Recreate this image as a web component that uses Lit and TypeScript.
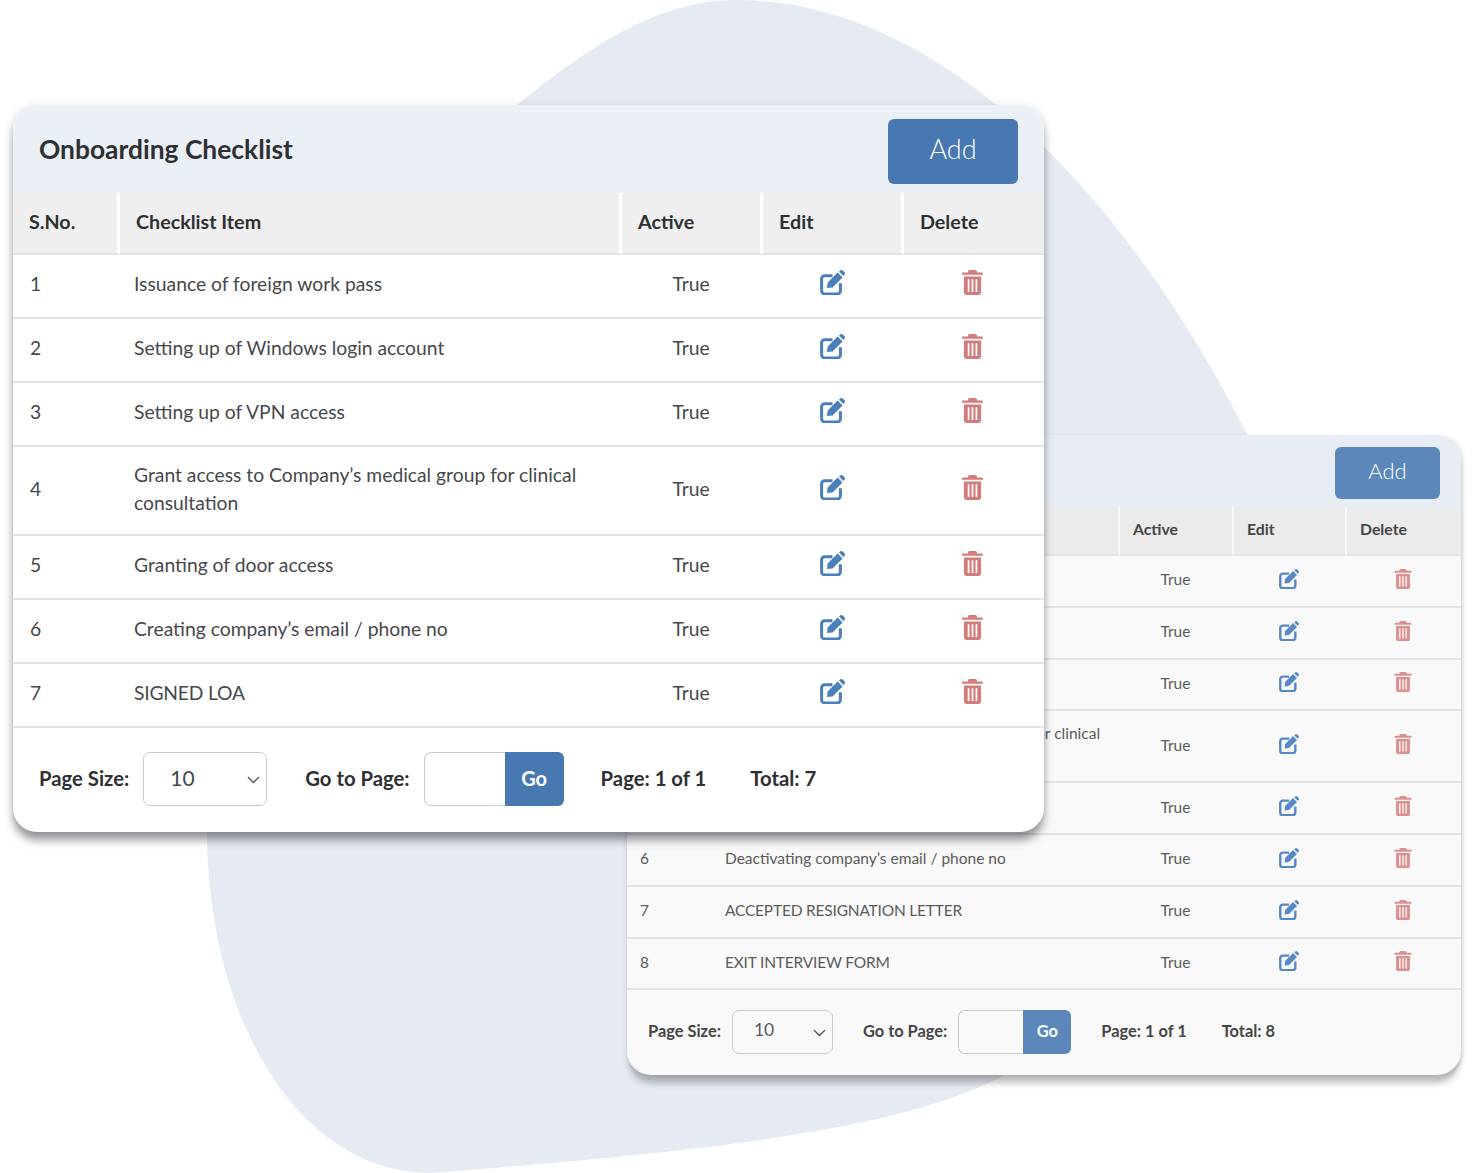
import { LitElement, html, css, svg } from "lit";
import { customElement, property } from "lit/decorators.js";

const editIcon = html`<svg class="edit" viewBox="0 0 25 25">
  ${svg`<path d="M12.5 5.8H4.6a3 3 0 0 0-3 3v12.1a3 3 0 0 0 3 3h12.8a3 3 0 0 0 3-3v-7.7" fill="none" stroke="currentColor" stroke-width="3"/>
  <path fill="currentColor" d="M7.6 12.4 17.6 2.5l4.9 4.9-10 10-5.5.6zM19 1.5l.8-.7a2.4 2.4 0 0 1 3.3 0l1.1 1.1a2.4 2.4 0 0 1 0 3.3l-.8.8z"/>`}
</svg>`;
const trashIcon = html`<svg class="trash" viewBox="0 0 22 26">
  ${svg`<path fill="currentColor" fill-rule="evenodd" d="M8 0h6a1.5 1.5 0 0 1 1.4 1L16 2.4h4.8A1.2 1.2 0 0 1 22 3.6V5H0V3.6a1.2 1.2 0 0 1 1.2-1.2H6L6.6 1A1.5 1.5 0 0 1 8 0zM2 6.6h18v17a2.4 2.4 0 0 1-2.4 2.4H4.4A2.4 2.4 0 0 1 2 23.6zM6 9.5v13.4h1.8V9.5zm4.1 0v13.4h1.8V9.5zm4.1 0v13.4H16V9.5z"/>`}
</svg>`;

@customElement("check-card")
class CheckCard extends LitElement {
  @property() heading = "";
  @property({ type: Array }) items: string[] = [];
  @property({ type: Boolean, reflect: true }) small = false;

  static styles = css`
    :host {
      display: block;
      box-sizing: border-box;
      font-family: "Lato", "Noto Sans", sans-serif;
      border-radius: 24px;
      overflow: hidden;
      --cols: 107px 502px 141px 141px 140px;
      --head-bg: #ebf0f7;
      --head-h: 88px;
      --th-h: 62px;
      --th-fs: 19.7px;
      --th-pad: 16px;
      --th-lift: 3px;
      --th-bg: #efefef;
      --th-sep: 3px;
      --row-h: 64px;
      --td-fs: 19.3px;
      --td-lh: 28px;
      --td-pad: 15.5px;
      --td-x: 17px;
      --item-x: 14px;
      --item-end: 24px;
      --shift: 2px;
      --icon-lift: 3px;
      --line: #e2e4ea;
      --line-w: 2px;
      --text: #46484b;
      --strong: #2e3033;
      --accent: #4878b2;
      --edit: #4a7fbc;
      --trash: #d27c7c;
      --bg: #fff;
      --title-fs: 26.4px;
      --btn-w: 130px;
      --btn-h: 65px;
      --btn-fs: 27px;
      --pad-x: 26px;
      --foot-fs: 20.3px;
      --ctl-h: 54px;
      --sel-w: 124px;
      --sel-fs: 21px;
      --sel-pad: 26px;
      --input-w: 81px;
      --go-w: 59px;
      --gap-lab: 14px;
      --gap-group: 38px;
      --gap-after: 37px;
      --gap-total: 44px;
      --go-fs: 20px;
      --foot-h: 104px;
      --edit-w: 25px;
      --edit-h: 25px;
      --trash-w: 21px;
      --trash-h: 25px;
      background: var(--bg);
    }
    :host([small]) {
      --cols: 86px 407px 114px 113px 114px;
      --head-bg: #e8ecf4;
      --head-h: 72px;
      --th-h: 49px;
      --th-fs: 15.8px;
      --th-pad: 13px;
      --th-lift: 5px;
      --th-bg: #ebebeb;
      --th-sep: 2.5px;
      --row-h: 51.75px;
      --td-fs: 15.5px;
      --td-lh: 23px;
      --td-pad: 12px;
      --td-x: 13px;
      --item-x: 12px;
      --item-end: 6px;
      --shift: 1px;
      --icon-lift: 2px;
      --line: #e3e3e3;
      --text: #5b5b5b;
      --strong: #464646;
      --accent: #5c87ba;
      --edit: #5588c4;
      --trash: #dc8f8f;
      --bg: #f9f9f9;
      --title-fs: 21px;
      --btn-w: 105px;
      --btn-h: 52px;
      --btn-fs: 22px;
      --pad-x: 21px;
      --foot-fs: 16.4px;
      --ctl-h: 44px;
      --sel-w: 101px;
      --sel-fs: 17.5px;
      --sel-pad: 21px;
      --input-w: 65px;
      --go-w: 48px;
      --gap-lab: 11px;
      --gap-group: 30px;
      --gap-after: 30px;
      --gap-total: 35px;
      --go-fs: 16.4px;
      --foot-h: 85px;
      --edit-w: 20px;
      --edit-h: 20px;
      --trash-w: 18px;
      --trash-h: 20px;
    }
    .head {
      height: var(--head-h);
      background: var(--head-bg);
      display: flex;
      align-items: center;
      justify-content: space-between;
      padding: 0 var(--pad-x);
    }
    h2 {
      margin: 0;
      font-size: var(--title-fs);
      font-weight: 700;
      color: var(--strong);
    }
    .add {
      width: var(--btn-w);
      height: var(--btn-h);
      box-sizing: border-box;
      padding-bottom: 5px;
      background: var(--accent);
      color: #fff;
      font-size: var(--btn-fs);
      font-weight: 300;
      border-radius: 6px;
      display: flex;
      align-items: center;
      justify-content: center;
      margin-top: 4px;
    }
    .row {
      display: grid;
      grid-template-columns: var(--cols);
    }
    .th {
      height: var(--th-h);
      box-sizing: border-box;
      background: var(--th-bg);
      border-right: var(--th-sep) solid var(--bg);
      border-bottom: var(--line-w) solid var(--line);
      padding: 0 0 var(--th-lift) var(--th-pad);
      display: flex;
      align-items: center;
      font-size: var(--th-fs);
      font-weight: 700;
      color: var(--strong);
    }
    .th:last-child { border-right: 0; }
    .body-row {
      min-height: var(--row-h);
      box-sizing: border-box;
      border-bottom: var(--line-w) solid var(--line);
      font-size: var(--td-fs);
      line-height: var(--td-lh);
      color: var(--text);
    }
    .td {
      display: flex;
      align-items: center;
      padding-top: calc(var(--td-pad) - var(--shift));
      padding-bottom: calc(var(--td-pad) + var(--shift));
    }
    .num { padding-left: var(--td-x); }
    .item { padding-left: var(--item-x); padding-right: var(--item-end); }
    .caps { letter-spacing: -0.2px; }
    .mid { justify-content: center; padding-right: 3px; }
    .edit, .trash { display: block; margin-bottom: var(--icon-lift); }
    .edit { width: var(--edit-w); height: var(--edit-h); color: var(--edit); }
    .trash { width: var(--trash-w); height: var(--trash-h); color: var(--trash); }
    .foot {
      height: var(--foot-h);
      box-sizing: border-box;
      display: flex;
      align-items: center;
      padding: 0 var(--pad-x) 2px;
      font-size: var(--foot-fs);
      font-weight: 700;
      color: var(--strong);
      white-space: nowrap;
    }
    .foot span { padding-bottom: 2px; }
    .sel {
      width: var(--sel-w);
      height: var(--ctl-h);
      box-sizing: border-box;
      border: 1.5px solid #c9c9c9;
      border-radius: 7px;
      margin: 0 var(--gap-group) 0 var(--gap-lab);
      padding: 0 6px 4px var(--sel-pad);
      display: flex;
      align-items: center;
      justify-content: space-between;
      font-size: var(--sel-fs);
      font-weight: 400;
      color: var(--text);
      background: var(--bg);
    }
    .chev { width: 13px; height: 8px; color: #555; margin-top: 6px; }
    .group {
      display: flex;
      height: var(--ctl-h);
      margin: 0 var(--gap-after) 0 var(--gap-lab);
    }
    .input {
      width: var(--input-w);
      box-sizing: border-box;
      border: 1.5px solid #c9c9c9;
      border-right: 0;
      border-radius: 7px 0 0 7px;
    }
    .go {
      width: var(--go-w);
      box-sizing: border-box;
      padding-bottom: 3px;
      background: var(--accent);
      color: #fff;
      border-radius: 0 6px 6px 0;
      display: flex;
      align-items: center;
      justify-content: center;
      font-size: var(--go-fs);
    }
    .total { margin-left: var(--gap-total); }
  `;

  render() {
    return html`
      <div class="head"><h2>${this.heading}</h2><div class="add">Add</div></div>
      <div class="row">
        ${["S.No.", "Checklist Item", "Active", "Edit", "Delete"].map((t) => html`<div class="th">${t}</div>`)}
      </div>
      ${this.items.map(
        (t, i) => html`<div class="row body-row">
          <div class="td num">${i + 1}</div>
          <div class="td item ${t === t.toUpperCase() ? "caps" : ""}">${t}</div>
          <div class="td mid">True</div>
          <div class="td mid">${editIcon}</div>
          <div class="td mid">${trashIcon}</div>
        </div>`
      )}
      <div class="foot">
        <span>Page Size:</span>
        <div class="sel">10<svg class="chev" viewBox="0 0 13 8"><path d="M1 1l5.5 5.5L12 1" fill="none" stroke="currentColor" stroke-width="1.3"></path></svg></div>
        <span>Go to Page:</span>
        <div class="group"><div class="input"></div><div class="go">Go</div></div>
        <span>Page: 1 of 1</span>
        <span class="total">Total: ${this.items.length}</span>
      </div>
    `;
  }
}

@customElement("app-root")
class AppRoot extends LitElement {
  static styles = css`
    :host {
      display: block;
      position: relative;
      width: 1472px;
      height: 1173px;
      overflow: hidden;
      background: #fff;
    }
    .blob { position: absolute; left: 0; top: 0; width: 1472px; height: 1173px; }
    .card { position: absolute; }
    .back {
      left: 627px;
      top: 435px;
      width: 834px;
      box-shadow: 0 10px 6px -2px rgba(40, 40, 40, 0.3), 2px 1px 4px rgba(0, 0, 0, 0.12);
    }
    .front {
      left: 13px;
      top: 105px;
      width: 1031px;
      box-shadow: 0 9px 10px -1px rgba(45, 50, 60, 0.5), 0 0 8px rgba(0, 0, 0, 0.1);
    }
  `;

  render() {
    return html`
      <svg class="blob" viewBox="0 0 1472 1173">
        <path fill="#e6eaf3" d="M517 105C590 45 660 0 735 0C840 0 930 50 1000 108C1090 180 1180 300 1250 440C1320 600 1240 860 1005 1075C900 1130 720 1150 430 1173C300 1173 207 1020 207 830C207 600 350 240 517 105Z"></path>
      </svg>
      <check-card class="card back" small heading="Offboarding Checklist" .items=${[
        "Cancellation of foreign work pass",
        "Removal of Windows login account",
        "Removal of VPN access",
        "Revoked access to Company’s medical group for clinical consultation",
        "Revoking of door access",
        "Deactivating company’s email / phone no",
        "ACCEPTED RESIGNATION LETTER",
        "EXIT INTERVIEW FORM",
      ]}></check-card>
      <check-card class="card front" heading="Onboarding Checklist" .items=${[
        "Issuance of foreign work pass",
        "Setting up of Windows login account",
        "Setting up of VPN access",
        "Grant access to Company’s medical group for clinical consultation",
        "Granting of door access",
        "Creating company’s email / phone no",
        "SIGNED LOA",
      ]}></check-card>
    `;
  }
}
